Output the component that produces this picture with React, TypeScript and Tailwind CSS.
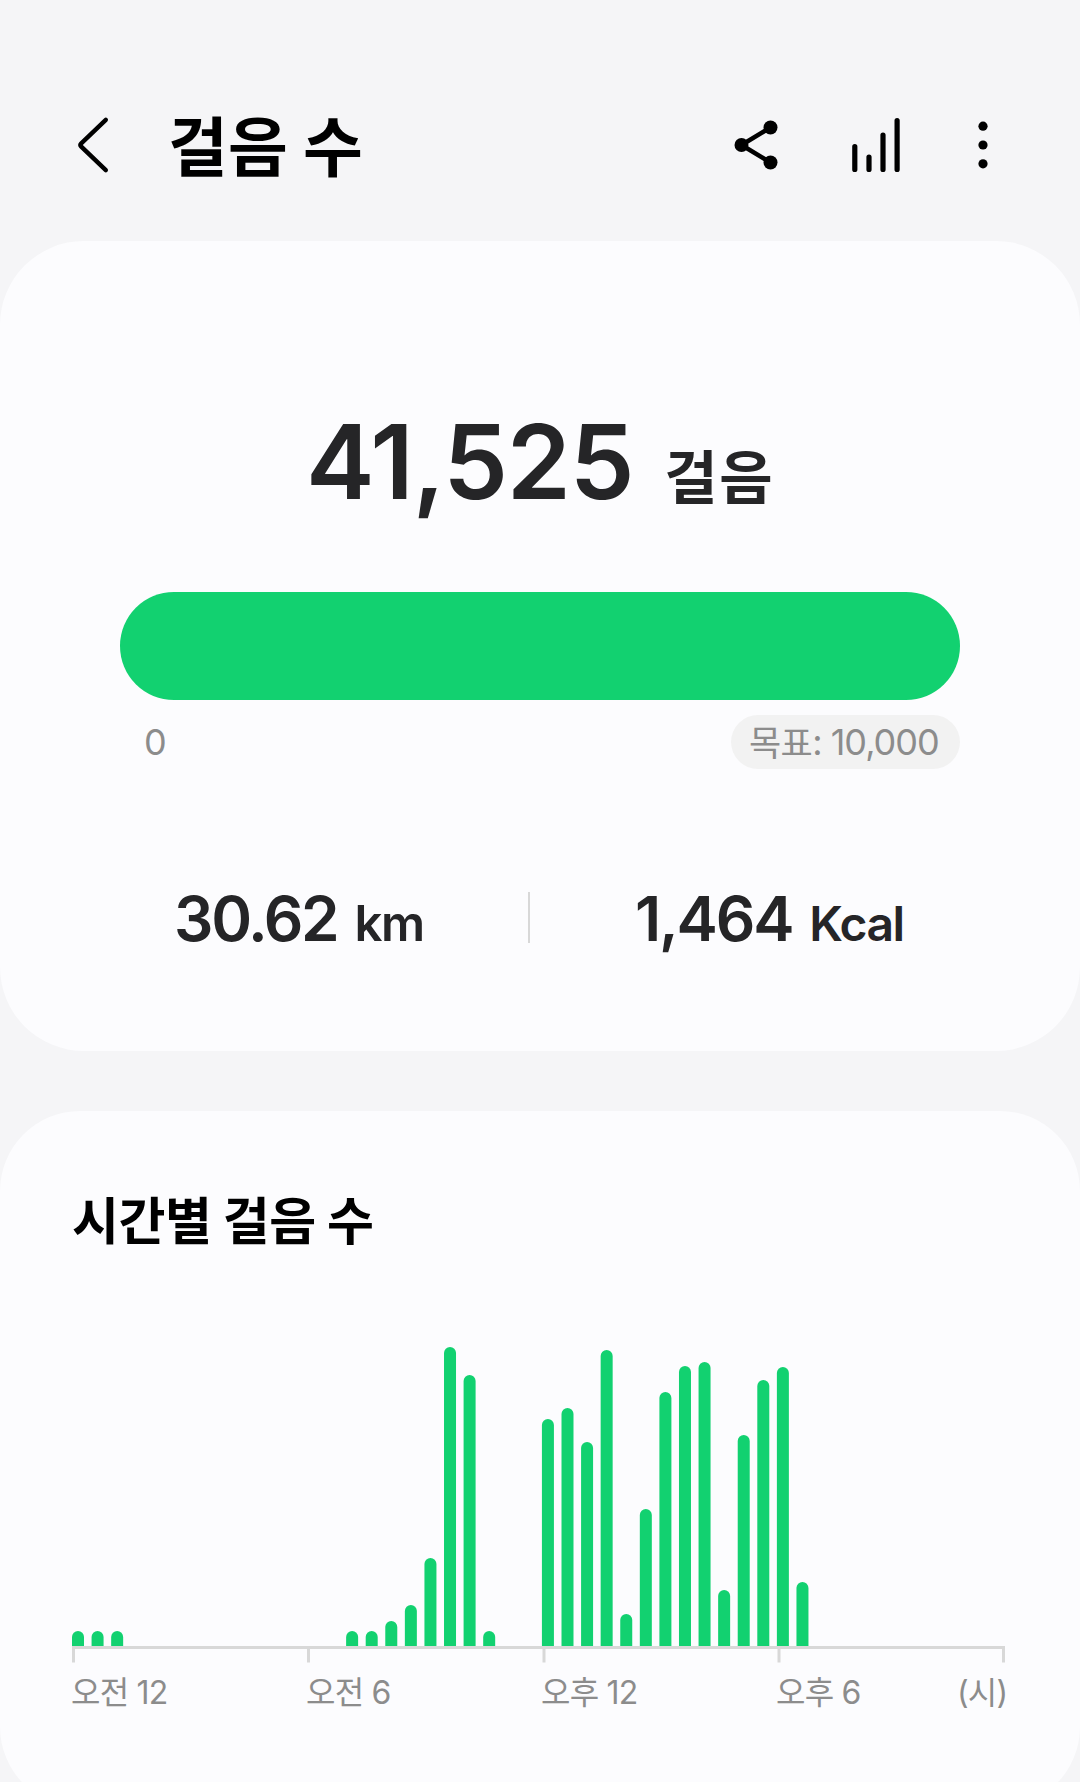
const bars = [
  15, 15, 15, 0, 0, 0, 0, 0, 0, 0, 0, 0,
  0, 0, 15, 15, 25, 41, 88, 299, 271, 15, 0, 0,
  227, 238, 204, 296, 32, 137, 254, 280, 284, 56, 211, 266,
  279, 64,
];

const ticks = [1.5, 236.5, 472, 707, 931.5];

const hours = ["오전 12", "오전 6", "오후 12", "오후 6"];

function Header() {
  return (
    <header className="flex h-[241px] items-center pt-[49px] text-black">
      <svg className="ml-[76px] h-[60px] w-[34px]" viewBox="0 0 34 60" fill="none" stroke="currentColor" strokeWidth="4.4" strokeLinecap="round" strokeLinejoin="round">
        <path d="M29.8 4.8L5 28.6Q3.6 30 5 31.4L29.8 55.2" />
      </svg>
      <h1 className="ml-[58px] whitespace-nowrap pb-[4px] font-['Noto_Sans_CJK_KR',sans-serif] text-[65px] leading-[80px] font-bold tracking-[0.2px]">걸음 수</h1>
      <div className="mr-[92px] ml-auto flex items-center">
        <svg className="h-[60px] w-[44px]" viewBox="0 0 44 60" fill="currentColor">
          <path d="M36.5 12.5L7.5 30L36.5 47.5" fill="none" stroke="currentColor" strokeWidth="4.6" />
          <circle cx="7.5" cy="30" r="7" />
          <circle cx="36.5" cy="12.5" r="7" />
          <circle cx="36.5" cy="47.5" r="7" />
        </svg>
        <svg className="ml-[73px] h-[60px] w-[50px]" viewBox="0 0 50 60" stroke="currentColor" strokeWidth="5.2" strokeLinecap="round">
          <path d="M3.8 31.5V54.5M18 42V54.5M32 20V54.5M46.1 5.5V54.5" />
        </svg>
        <svg className="ml-[77px] h-[60px] w-[10px]" viewBox="0 0 10 60" fill="currentColor">
          <circle cx="5" cy="11.2" r="4.6" />
          <circle cx="5" cy="30" r="4.6" />
          <circle cx="5" cy="48.8" r="4.6" />
        </svg>
      </div>
    </header>
  );
}

function Summary() {
  return (
    <section className="h-[810px] rounded-[84px] bg-[#fcfcfe] px-[120px] pt-[160px] text-[#252527]">
      <div className="flex h-[121px] items-center whitespace-nowrap pl-[186px]">
        <span className="text-[103px] leading-[121px] font-semibold tracking-[-1.2px]">41,525</span>
        <span className="ml-[31px] pt-[25px] font-['Noto_Sans_CJK_KR',sans-serif] text-[58px] leading-[70px] font-bold tracking-[1.5px]">걸음</span>
      </div>
      <div className="mt-[70px] h-[108px] rounded-full bg-[#12d170]"></div>
      <div className="mt-[15px] flex h-[54px] items-center justify-between text-[36px] leading-[52px] text-[#8c8c8c]">
        <span className="pl-[24px]">0</span>
        <div className="flex h-[54px] w-[229px] items-center whitespace-nowrap rounded-full bg-[#f2f2f2] pl-[18px] tracking-[-1px]">
          <span className="pb-[2px] font-['Noto_Sans_CJK_KR',sans-serif] text-[35px] tracking-[-0.6px]">목표</span>
          <span className="whitespace-pre">: 10,000</span>
        </div>
      </div>
      <div className="mt-[123px] flex h-[51px] items-center whitespace-nowrap font-semibold">
        <div className="flex w-[408px] items-baseline pt-[6px] pl-[54px] leading-[51px]">
          <span className="text-[62px] tracking-[-2.3px]">30.62</span>
          <span className="ml-[17px] text-[49px] tracking-[-1.4px]">km</span>
        </div>
        <div className="h-[51px] w-[2px] bg-[#d8d8d8]"></div>
        <div className="flex items-baseline pt-[6px] pl-[105px] leading-[51px]">
          <span className="text-[62px] tracking-[-2.2px]">1,464</span>
          <span className="ml-[17px] text-[48px] tracking-[-1.5px]">Kcal</span>
        </div>
      </div>
    </section>
  );
}

function Hourly() {
  return (
    <section className="mt-[60px] h-[696px] rounded-[80px] bg-[#fcfcfe] px-[72px] pt-[75px]">
      <h2 className="h-[64px] whitespace-nowrap font-['Noto_Sans_CJK_KR',sans-serif] text-[51px] leading-[64px] font-bold tracking-[-0.4px] text-black">시간별 걸음 수</h2>
      <svg className="mt-[90px] block h-[323px] w-[933px]" viewBox="0 0 933 323">
        {bars.map((h, i) =>
          h > 0 ? (
            <path key={i} fill="#12d170" d={`M${i * 19.58} 306v${6 - h}a6 6 0 0 1 12 0v${h - 6}z`} />
          ) : null
        )}
        <path d="M0 307.5H933" stroke="#d8d8d8" strokeWidth="3" />
        {ticks.map((x) => (
          <path key={x} d={`M${x} 309V322.5`} stroke="#d8d8d8" strokeWidth="3" />
        ))}
      </svg>
      <div className="-ml-px mt-[8px] flex whitespace-nowrap font-[Inter,'Noto_Sans_CJK_KR',sans-serif] text-[32px] leading-[44px] tracking-[-0.8px] text-[#8c8c8c]">
        {hours.map((label) => (
          <span key={label} className="w-[235px] shrink-0">{label}</span>
        ))}
        <span className="-ml-[54px]">(시)</span>
      </div>
    </section>
  );
}

export default function App() {
  return (
    <div className="h-[1782px] w-[1080px] overflow-hidden bg-[#f5f5f7] font-[Inter,'Noto_Sans_CJK_KR',sans-serif]">
      <Header />
      <Summary />
      <Hourly />
    </div>
  );
}
